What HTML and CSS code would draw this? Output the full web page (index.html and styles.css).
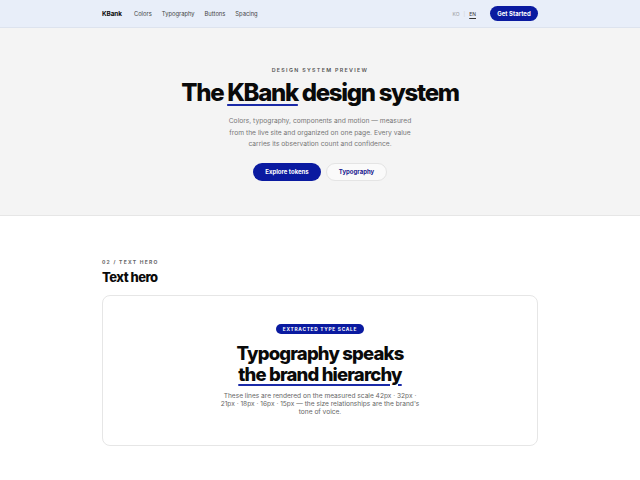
FILE: index.html
```html
<!DOCTYPE html>
<html lang="en">
<head>
<meta charset="utf-8">
<title>KBank design system</title>
<link rel="stylesheet" href="styles.css">
</head>
<body>
<header class="nav">
  <div class="wrap nav-inner">
    <div class="nav-left">
      <span class="logo">KBank</span>
      <nav class="links">
        <a>Colors</a>
        <a>Typography</a>
        <a>Buttons</a>
        <a>Spacing</a>
      </nav>
    </div>
    <div class="nav-right">
      <div class="lang"><span class="ko">KO</span><span class="sep">|</span><span class="en">EN</span></div>
      <a class="btn-nav">Get Started</a>
    </div>
  </div>
</header>
<section class="hero">
  <p class="eyebrow">DESIGN SYSTEM PREVIEW</p>
  <h1 class="title">The <span class="ul">KBank</span> design system</h1>
  <p class="lead">Colors, typography, components and motion — measured from the live site and organized on one page. Every value carries its observation count and confidence.</p>
  <div class="actions">
    <a class="btn btn-primary">Explore tokens</a>
    <a class="btn btn-ghost">Typography</a>
  </div>
</section>
<section class="section">
  <div class="wrap">
    <p class="sec-label">02 / TEXT HERO</p>
    <h2 class="sec-title">Text hero</h2>
    <div class="card">
      <span class="badge">EXTRACTED TYPE SCALE</span>
      <h3 class="card-title">Typography speaks<br><span class="ul">the brand hierarchy</span></h3>
      <p class="card-text">These lines are rendered on the measured scale 42px · 32px · 21px · 18px · 16px · 15px — the size relationships are the brand's tone of voice.</p>
    </div>
  </div>
</section>
</body>
</html>
```
FILE: styles.css
```css
* { box-sizing: border-box; }
html, body { margin: 0; padding: 0; }
body {
  font-family: Inter, "Liberation Sans", sans-serif;
  color: #0a0a0a;
  background: #fff;
}
a { text-decoration: none; color: inherit; }
.wrap { width: 436px; margin: 0 auto; }

.nav {
  height: 28px;
  background: #e8eef9;
  border-bottom: 1px solid #dde3ee;
}
.nav-inner {
  height: 27px;
  display: flex;
  align-items: center;
  justify-content: space-between;
}
.nav-left { display: flex; align-items: center; gap: 12px; }
.logo { font-weight: 700; font-size: 6.4px; letter-spacing: -0.01em; }
.links { display: flex; gap: 10px; font-size: 5.8px; color: #444; }
.nav-right { display: flex; align-items: center; gap: 14px; }
.lang { display: flex; align-items: center; gap: 4px; font-size: 5px; color: #999; }
.sep { color: #ccc; }
.en { color: #333; text-decoration: underline; text-underline-offset: 1.5px; }
.btn-nav {
  background: #0a1aa0;
  color: #fff;
  font-weight: 700;
  font-size: 6px;
  height: 15px;
  width: 48px;
  justify-content: center;
  border-radius: 8px;
  display: inline-flex;
  align-items: center;
}

.hero {
  background: #f4f4f4;
  border-bottom: 1px solid #e6e6e6;
  height: 188px;
  padding-top: 39px;
  text-align: center;
}
.eyebrow {
  margin: 0;
  font-size: 5.3px;
  font-weight: 600;
  letter-spacing: 0.25em;
  color: #555;
}
.title {
  margin: 6px 0 0;
  font-size: 24px;
  font-weight: 800;
  letter-spacing: -0.055em;
  line-height: 28px;
}
.ul {
  text-decoration: underline;
  text-decoration-color: #1a2aa8;
  text-decoration-thickness: 2px;
  text-underline-offset: 3px;
}
.lead {
  margin: 9px auto 0;
  width: 186px;
  font-size: 6.7px;
  line-height: 11.6px;
  color: #777;
}
.actions {
  margin-top: 12px;
  display: flex;
  justify-content: center;
  gap: 5px;
}
.btn {
  height: 18px;
  border-radius: 9px;
  display: inline-flex;
  align-items: center;
  justify-content: center;
  font-size: 6px;
  font-weight: 700;
}
.btn-primary { width: 68px; background: #0a1aa0; color: #fff; }
.btn-ghost { width: 61px; background: #fafafa; color: #1a2090; border: 1px solid #e4e4e4; }

.section { padding-top: 43px; }
.sec-label {
  margin: 0;
  font-size: 5px;
  font-weight: 700;
  letter-spacing: 0.25em;
  color: #666;
}
.sec-title {
  margin: 3px 0 0;
  font-size: 13px;
  font-weight: 800;
  letter-spacing: -0.04em;
  line-height: 18px;
}
.card {
  margin-top: 9px;
  height: 151px;
  border: 1px solid #e6e6e6;
  border-radius: 8px;
  padding-top: 28px;
  display: flex;
  flex-direction: column;
  align-items: center;
  text-align: center;
}
.badge {
  background: #0a1aa0;
  color: #fff;
  font-size: 4.8px;
  font-weight: 700;
  letter-spacing: 0.15em;
  height: 10px;
  padding: 0 7px;
  border-radius: 5px;
  display: inline-flex;
  align-items: center;
}
.card-title {
  margin: 9px 0 0;
  font-size: 18.5px;
  font-weight: 800;
  letter-spacing: -0.045em;
  line-height: 21px;
}
.card-title .ul { text-underline-offset: 3px; }
.card-text {
  margin: 7px 0 0;
  width: 202px;
  font-size: 6.6px;
  line-height: 8.2px;
  color: #666;
}
```
